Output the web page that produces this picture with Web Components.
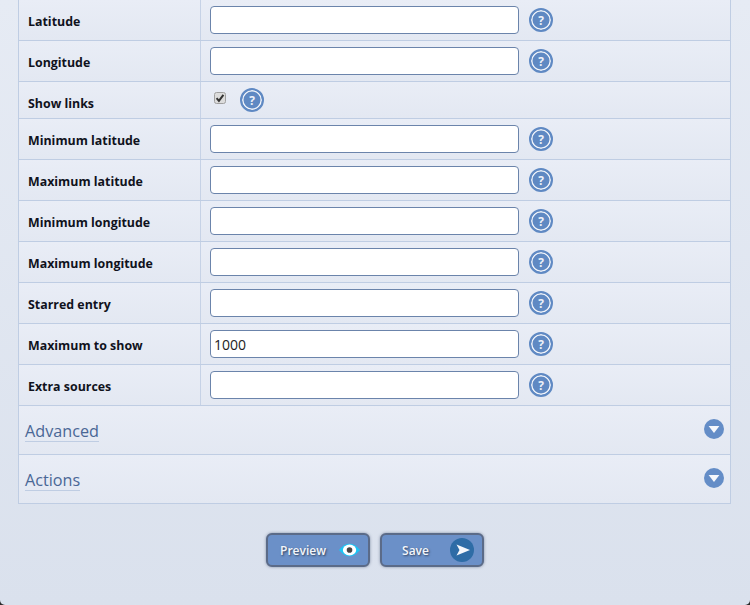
<!DOCTYPE html>
<html>
<head>
<meta charset="utf-8">
<title>Settings</title>
<style>
    html {
        background: #2b2b2b;
    }
    html, body {
        margin: 0;
        height: 605px;
        overflow: hidden;
    }
    body {
        background: linear-gradient(#e6ebf4, #dae1ed);
        border-radius: 0 0 5px 5px;
        font-family: "Open Sans", "Noto Sans", sans-serif;
    }
</style>
</head>
<body>
<settings-panel>
    <form-row label="Latitude"><text-field></text-field><help-icon></help-icon></form-row>
    <form-row label="Longitude"><text-field></text-field><help-icon></help-icon></form-row>
    <form-row label="Show links" compact><check-field></check-field><help-icon></help-icon></form-row>
    <form-row label="Minimum latitude"><text-field></text-field><help-icon></help-icon></form-row>
    <form-row label="Maximum latitude"><text-field></text-field><help-icon></help-icon></form-row>
    <form-row label="Minimum longitude"><text-field></text-field><help-icon></help-icon></form-row>
    <form-row label="Maximum longitude"><text-field></text-field><help-icon></help-icon></form-row>
    <form-row label="Starred entry"><text-field></text-field><help-icon></help-icon></form-row>
    <form-row label="Maximum to show"><text-field value="1000"></text-field><help-icon></help-icon></form-row>
    <form-row label="Extra sources"><text-field></text-field><help-icon></help-icon></form-row>
    <collapse-section label="Advanced"></collapse-section>
    <collapse-section label="Actions"></collapse-section>
</settings-panel>
<button-bar>
    <action-button label="Preview" icon="eye"></action-button>
    <action-button label="Save" icon="send"></action-button>
</button-bar>

<script>
class SettingsPanel extends HTMLElement {
    constructor() {
        super();
        this.attachShadow({ mode: 'open' });
        this.shadowRoot.innerHTML = `
            <style>
                :host {
                    display: block;
                    margin: 0 19px 0 18px;
                    border: 1px solid #bfcde3;
                    border-top: 0;
                }
            </style>
            <slot></slot>
        `;
    }
}

class FormRow extends HTMLElement {
    constructor() {
        super();
        this.attachShadow({ mode: 'open' });
    }

    connectedCallback() {
        this.shadowRoot.innerHTML = `
            <style>
                :host {
                    display: grid;
                    grid-template-columns: 182px 1fr;
                    height: 40px;
                    border-bottom: 1px solid #bfcde3;
                    background: linear-gradient(#e9edf6, #e3e8f2);
                }
                :host([compact]) {
                    height: 36px;
                }
                :host([compact]) .label {
                    padding-top: 7px;
                }
                .label {
                    display: flex;
                    align-items: center;
                    padding: 3px 0 0 9px;
                    border-right: 1px solid #c6d2e6;
                    font-size: 12.4px;
                    font-weight: 700;
                    color: #10121c;
                }
                .field {
                    display: flex;
                    align-items: center;
                    gap: 10px;
                    padding-left: 9px;
                }
            </style>
            <div class="label">${this.getAttribute('label')}</div>
            <div class="field"><slot></slot></div>
        `;
    }
}

class TextField extends HTMLElement {
    constructor() {
        super();
        this.attachShadow({ mode: 'open' });
    }

    connectedCallback() {
        const value = this.getAttribute('value') || '';
        this.shadowRoot.innerHTML = `
            <style>
                :host {
                    display: block;
                }
                input {
                    display: block;
                    box-sizing: border-box;
                    width: 309px;
                    height: 28px;
                    margin: 0;
                    padding: 0 3px;
                    border: 1px solid #6b84ab;
                    border-radius: 4px;
                    background: #fff;
                    font: 14px "Open Sans", "Noto Sans", sans-serif;
                    color: #222;
                    outline: none;
                }
            </style>
            <input type="text" value="${value}">
        `;
    }
}

class CheckField extends HTMLElement {
    constructor() {
        super();
        this.attachShadow({ mode: 'open' });
        this.shadowRoot.innerHTML = `
            <style>
                :host {
                    display: block;
                    box-sizing: border-box;
                    width: 20px;
                    padding-left: 4px;
                    margin-top: -4px;
                }
                svg {
                    display: block;
                }
            </style>
            <svg width="12" height="12" viewBox="0 0 12 12">
                <rect x="0.5" y="0.5" width="11" height="11" rx="2" fill="#dcdcdc" stroke="#a0a0a0"/>
                <path d="M2.6 6.2 L4.9 8.8 L9.4 2.8" fill="none" stroke="#333" stroke-width="2"/>
            </svg>
        `;
    }
}

class HelpIcon extends HTMLElement {
    constructor() {
        super();
        this.attachShadow({ mode: 'open' });
        this.shadowRoot.innerHTML = `
            <style>
                :host {
                    display: block;
                    width: 24px;
                    height: 24px;
                }
                .ring {
                    box-sizing: border-box;
                    display: flex;
                    align-items: center;
                    justify-content: center;
                    width: 24px;
                    height: 24px;
                    border-radius: 50%;
                    background: #5f89c3;
                    border: 2px solid #5f89c3;
                    box-shadow: inset 0 0 0 1.5px #f1f4fa;
                    font: 700 12px "Open Sans", sans-serif;
                    color: #edf1f8;
                }
            </style>
            <div class="ring">?</div>
        `;
    }
}

class CollapseSection extends HTMLElement {
    constructor() {
        super();
        this.attachShadow({ mode: 'open' });
    }

    connectedCallback() {
        this.shadowRoot.innerHTML = `
            <style>
                :host {
                    display: flex;
                    align-items: flex-start;
                    justify-content: space-between;
                    box-sizing: border-box;
                    height: 49px;
                    padding: 13px 6px 0 6px;
                    border-bottom: 1px solid #bfcde3;
                    background: linear-gradient(#e9edf6, #e3e8f2);
                }
                :host(:last-child) {
                    height: 48px;
                    border-bottom: 0;
                }
                .title {
                    margin-top: 2px;
                    font-size: 16.2px;
                    line-height: 20px;
                    color: #4a6796;
                    border-bottom: 1px solid #bfcde3;
                }
                svg {
                    display: block;
                }
            </style>
            <span class="title">${this.getAttribute('label')}</span>
            <svg width="20" height="20" viewBox="0 0 20 20">
                <circle cx="10" cy="10" r="10" fill="#648dc7"/>
                <path d="M4.6 7 H15.4 L10 14 Z" fill="#f6f8fc"/>
            </svg>
        `;
    }
}

class ButtonBar extends HTMLElement {
    constructor() {
        super();
        this.attachShadow({ mode: 'open' });
        this.shadowRoot.innerHTML = `
            <style>
                :host {
                    display: flex;
                    justify-content: center;
                    gap: 10px;
                    margin-top: 29px;
                }
            </style>
            <slot></slot>
        `;
    }
}

const ACTION_ICONS = {
    eye: `<svg width="24" height="24" viewBox="0 0 24 24">
            <path d="M0 12 C4 7 8 4.8 12 4.8 C16 4.8 20 7 24 12 C20 17 16 19.2 12 19.2 C8 19.2 4 17 0 12 Z" fill="#1cc4f4"/>
            <ellipse cx="12" cy="12" rx="7.6" ry="6.2" fill="#fff"/>
            <circle cx="12" cy="12" r="3.2" fill="#444"/>
          </svg>`,
    send: `<svg width="24" height="24" viewBox="0 0 24 24">
            <circle cx="12" cy="12" r="12" fill="#2e6ca6"/>
            <path d="M6.5 6.5 L20 12 L6.5 17.5 L9.5 12 Z" fill="#f4f7fb"/>
          </svg>`
};

class ActionButton extends HTMLElement {
    constructor() {
        super();
        this.attachShadow({ mode: 'open' });
    }

    connectedCallback() {
        this.shadowRoot.innerHTML = `
            <style>
                :host {
                    display: flex;
                    align-items: center;
                    box-sizing: border-box;
                    width: 104px;
                    height: 34px;
                    padding: 0 8px 0 12px;
                    border: 2px solid #5b6b88;
                    border-radius: 6px;
                    background: #6b90c8;
                    box-shadow: 0 0 3px rgba(70, 85, 115, 0.6);
                }
                .text {
                    flex: 1;
                    text-align: center;
                    padding-right: 13px;
                    font-size: 12px;
                    font-weight: 600;
                    color: #f3f6fb;
                    text-shadow: 1px 1px 2px #33435f;
                }
                svg {
                    display: block;
                }
            </style>
            <span class="text">${this.getAttribute('label')}</span>
            ${ACTION_ICONS[this.getAttribute('icon')]}
        `;
    }
}

customElements.define('settings-panel', SettingsPanel);
customElements.define('form-row', FormRow);
customElements.define('text-field', TextField);
customElements.define('check-field', CheckField);
customElements.define('help-icon', HelpIcon);
customElements.define('collapse-section', CollapseSection);
customElements.define('button-bar', ButtonBar);
customElements.define('action-button', ActionButton);
</script>
</body>
</html>
